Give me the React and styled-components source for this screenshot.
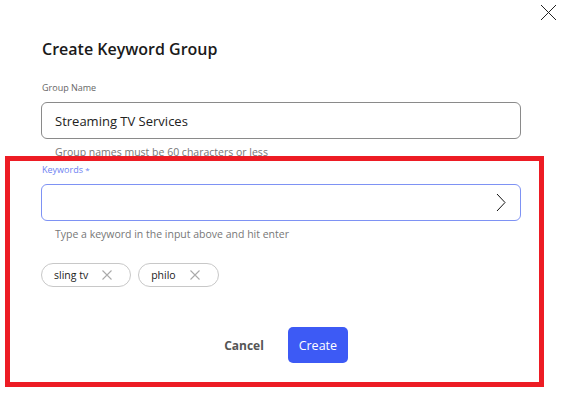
import React from "react";
import styled, { createGlobalStyle } from "styled-components";

const GlobalStyle = createGlobalStyle`
  * { box-sizing: border-box; }
  html, body { margin: 0; padding: 0; background: #fff; }
  body { font-family: "Open Sans", "Noto Sans", sans-serif; }
`;

const KEYWORDS = ["sling tv", "philo"];

export default function App() {
  return (
    <Dialog>
      <GlobalStyle />
      <CloseButton aria-label="Close">
        <svg width="17" height="17" viewBox="0 0 17 17">
          <path d="M1 1 L16 16 M16 1 L1 16" stroke="#222" strokeWidth="1" fill="none" />
        </svg>
      </CloseButton>

      <Title>Create Keyword Group</Title>

      <Field>
        <Label>Group Name</Label>
        <InputBox>
          <InputText>Streaming TV Services</InputText>
        </InputBox>
        <Helper>Group names must be 60 characters or less</Helper>
      </Field>

      <Field second>
        <Label active>
          Keywords <Star>*</Star>
        </Label>
        <InputBox active>
          <InputText />
          <svg width="10" height="19" viewBox="0 0 10 19">
            <path d="M1 1 L9 9.5 L1 18" stroke="#111" strokeWidth="1" fill="none" />
          </svg>
        </InputBox>
        <Helper>Type a keyword in the input above and hit enter</Helper>
      </Field>

      <Chips>
        {KEYWORDS.map((k) => (
          <Chip key={k}>
            <span>{k}</span>
            <svg width="10" height="10" viewBox="0 0 10 10">
              <path d="M0.5 0.5 L9.5 9.5 M9.5 0.5 L0.5 9.5" stroke="#aaa" strokeWidth="1.1" fill="none" />
            </svg>
          </Chip>
        ))}
      </Chips>

      <Actions>
        <CancelButton>Cancel</CancelButton>
        <CreateButton>Create</CreateButton>
      </Actions>

      <Highlight />
    </Dialog>
  );
}

const Dialog = styled.div`
  position: relative;
  width: 566px;
  height: 397px;
  padding: 38px 45px 0 41px;
  display: flex;
  flex-direction: column;
  background: #fff;
  overflow: hidden;
`;

const CloseButton = styled.div`
  position: absolute;
  top: 4px;
  right: 9px;
  width: 17px;
  height: 17px;
  display: flex;
`;

const Title = styled.h1`
  margin: 0 0 0 1px;
  font-size: 16px;
  line-height: 22px;
  font-weight: 600;
  color: #1a1a1a;
`;

const Field = styled.div`
  display: flex;
  flex-direction: column;
  margin-top: ${(p) => (p.second ? "4px" : "21px")};
`;

const Label = styled.div`
  font-size: 9px;
  line-height: 13px;
  color: ${(p) => (p.active ? "#6d82f2" : "#666")};
  margin-bottom: 8px;
  padding-left: 1px;
`;

const Star = styled.span`
  font-size: 8px;
  vertical-align: top;
`;

const InputBox = styled.div`
  height: 37px;
  border: 1px solid ${(p) => (p.active ? "#7e92f4" : "#8a8a8a")};
  border-radius: 6px;
  display: flex;
  align-items: center;
  justify-content: space-between;
  padding: 0 14px 0 13px;
`;

const InputText = styled.div`
  font-size: 13px;
  color: #222;
`;

const Helper = styled.div`
  font-size: 10.5px;
  line-height: 14px;
  color: #777;
  margin-top: 6px;
  padding-left: 14px;
`;

const Chips = styled.div`
  display: flex;
  gap: 7px;
  margin-top: 22px;
`;

const Chip = styled.div`
  height: 24px;
  border: 1px solid #c8c8c8;
  border-radius: 12px;
  display: flex;
  align-items: center;
  gap: 14px;
  padding: 0 18px 0 12px;
  font-size: 10.5px;
  color: #222;
`;

const Actions = styled.div`
  display: flex;
  justify-content: center;
  align-items: center;
  gap: 24px;
  margin-top: 40px;
  padding-left: 10px;
`;

const CancelButton = styled.div`
  font-size: 12px;
  font-weight: 700;
  color: #555;
`;

const CreateButton = styled.div`
  width: 60px;
  height: 36px;
  border-radius: 5px;
  background: #3d5af5;
  color: #fff;
  font-size: 12.5px;
  display: flex;
  align-items: center;
  justify-content: center;
`;

const Highlight = styled.div`
  position: absolute;
  left: 5px;
  top: 156px;
  width: 539px;
  height: 231px;
  border: 5px solid #ed1c24;
  pointer-events: none;
`;
